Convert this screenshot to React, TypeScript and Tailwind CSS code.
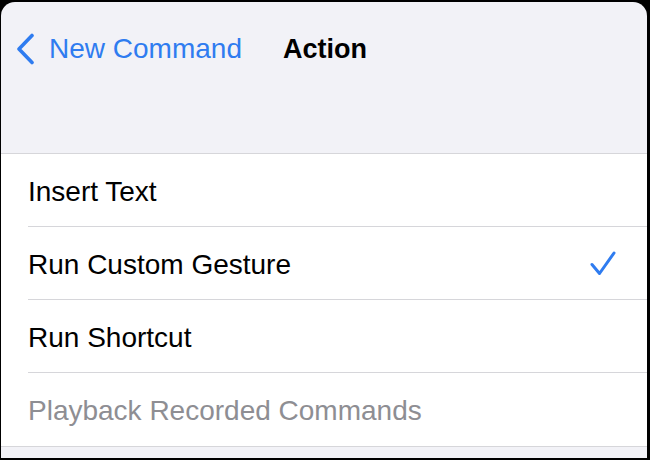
import React from "react";

const font = { fontFamily: '"Liberation Sans", Arial, sans-serif' };

function Row({
  label,
  muted,
  checked,
  last,
}: {
  label: string;
  muted?: boolean;
  checked?: boolean;
  last?: boolean;
}) {
  return (
    <div className={`bg-white pl-[27px] ${last ? "border-b border-[#d6d6da]" : ""}`}>
      <div
        className={`flex h-[73px] items-center justify-between pr-[31px] ${
          last ? "" : "border-b border-[#d6d6da]"
        }`}
      >
        <span
          className={`pt-[3px] text-[28px] leading-none ${muted ? "text-[#8e8e93]" : "text-black"}`}
        >
          {label}
        </span>
        {checked && (
          <svg width="26" height="25" viewBox="0 0 26 25" fill="none">
            <path
              d="M2 13.5 L9.5 22.5 L24 2"
              stroke="#2f7cf0"
              strokeWidth="3"
              strokeLinecap="round"
              strokeLinejoin="round"
            />
          </svg>
        )}
      </div>
    </div>
  );
}

export default function App() {
  return (
    <div
      className="w-[650px] h-[460px] bg-black pt-[2px] pl-[1px] pr-[3px] pb-[2px]"
      style={font}
    >
      <div className="flex h-full flex-col overflow-hidden rounded-t-[14px] bg-[#f2f2f7]">
        <div className="h-[152px] shrink-0 border-b border-[#d6d6da] pt-[29px] pl-[15px]">
          <div className="flex h-[36px] items-center">
            <svg width="19" height="32" viewBox="0 0 19 32" fill="none">
              <path
                d="M16 2.5 L3 16 L16 29.5"
                stroke="#2f7cf0"
                strokeWidth="3.6"
                strokeLinecap="round"
                strokeLinejoin="round"
              />
            </svg>
            <span className="ml-[14px] text-[28px] leading-none text-[#2f7cf0]">
              New Command
            </span>
            <span className="ml-[41px] text-[27px] font-bold leading-none text-black">
              Action
            </span>
          </div>
        </div>
        <Row label="Insert Text" />
        <Row label="Run Custom Gesture" checked />
        <Row label="Run Shortcut" />
        <Row label="Playback Recorded Commands" muted last />
        <div className="flex-1 bg-[#f2f2f7]" />
      </div>
    </div>
  );
}
